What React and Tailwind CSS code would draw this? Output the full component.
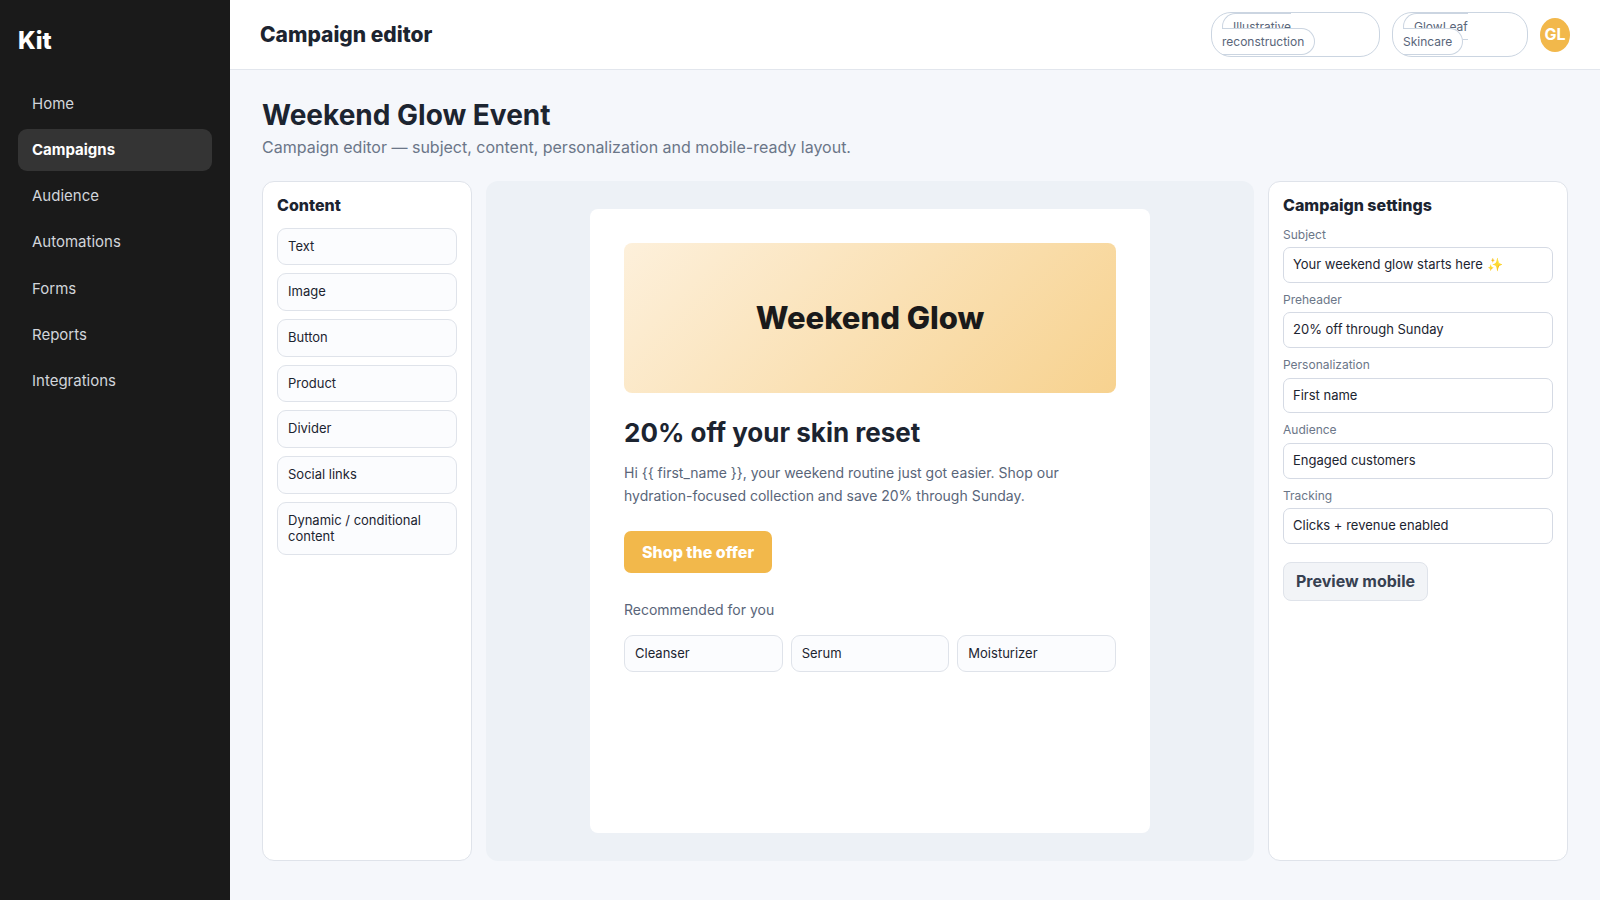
import React, { useState } from 'react';

const navItems = ['Home', 'Campaigns', 'Audience', 'Automations', 'Forms', 'Reports', 'Integrations'];

const contentBlocks = [
  'Text',
  'Image',
  'Button',
  'Product',
  'Divider',
  'Social links',
  'Dynamic / conditional content',
];

const products = ['Cleanser', 'Serum', 'Moisturizer'];

const initialSettings = [
  { id: 'subject', label: 'Subject', value: 'Your weekend glow starts here ✨' },
  { id: 'preheader', label: 'Preheader', value: '20% off through Sunday' },
  { id: 'personalization', label: 'Personalization', value: 'First name' },
  { id: 'audience', label: 'Audience', value: 'Engaged customers' },
  { id: 'tracking', label: 'Tracking', value: 'Clicks + revenue enabled' },
];

const Sidebar = () => (
  <aside className="w-[230px] shrink-0 bg-[#1a1a1a] px-[18px] pt-[26px] text-white">
    <div className="mb-7 text-[24px] font-extrabold">Kit</div>
    <nav className="flex flex-col gap-1">
      {navItems.map((item) => (
        <a
          key={item}
          href="#"
          className={
            item === 'Campaigns'
              ? 'rounded-[9px] bg-[#343434] px-3.5 py-3 text-[15px] font-bold text-white'
              : 'rounded-[9px] px-3.5 py-3 text-[15px] text-[#d1d5db]'
          }
        >
          {item}
        </a>
      ))}
    </nav>
  </aside>
);

// The inner pill is inline, so it breaks over two lines together with its text
const Pill = ({ className, children }) => (
  <span className={`rounded-[20px] border border-[#cbd5e1] bg-white px-2.5 pt-1.5 pb-[7px] text-[12px] leading-[15px] text-[#596579] ${className}`}>
    <span className="rounded-full border border-[#cbd5e1] bg-white px-2.5 py-[5px]">{children}</span>
  </span>
);

const Topbar = () => (
  <header className="flex h-[70px] items-center justify-between border-b border-[#e2e6ed] bg-white px-[30px]">
    <div className="text-[21px] font-extrabold">Campaign editor</div>
    <div className="flex items-center gap-3">
      <Pill className="w-[169px]">Illustrative reconstruction</Pill>
      <Pill className="w-[136px]">GlowLeaf Skincare</Pill>
      <div className="flex h-[34px] w-[30px] items-center justify-center rounded-[50%] bg-[#f2b84b] font-bold text-white">
        GL
      </div>
    </div>
  </header>
);

const Block = ({ children }) => (
  <div className="rounded-[9px] border border-[#dfe3ea] bg-[#fbfcfe] p-2.5 text-[13px]">{children}</div>
);

const EmailPreview = () => (
  <div className="flex justify-center rounded-xl bg-[#edf1f6] p-7">
    <div className="w-full max-w-[560px] rounded-lg bg-white p-[34px]">
      <div className="flex h-[150px] items-center justify-center rounded-lg bg-[linear-gradient(135deg,#fdf0db,#f7d28f)] text-[31px] font-extrabold text-[#1a1a1a]">
        Weekend Glow
      </div>
      <h2 className="mt-6 text-[26px] font-bold">20% off your skin reset</h2>
      <p className="mt-3 text-[14px] leading-[23px] text-[#596579]">
        {'Hi {{ first_name }}, your weekend routine just got easier. Shop our hydration-focused collection and save 20% through Sunday.'}
      </p>
      <button className="mt-6 rounded-[7px] bg-[#f2b84b] px-[18px] py-[11px] leading-5 font-extrabold text-white">
        Shop the offer
      </button>
      <p className="mt-[25px] text-[14px] leading-[23px] text-[#596579]">Recommended for you</p>
      <div className="mt-3.5 grid grid-cols-3 gap-2">
        {products.map((product) => (
          <Block key={product}>{product}</Block>
        ))}
      </div>
    </div>
  </div>
);

const SettingsPanel = () => {
  const [settings, setSettings] = useState(initialSettings);

  const handleChange = (id, value) => {
    setSettings(settings.map((s) => (s.id === id ? { ...s, value } : s)));
  };

  return (
    <section className="rounded-xl border border-[#dfe3ea] bg-white p-3.5">
      <h3 className="mb-3 font-extrabold">Campaign settings</h3>
      {settings.map(({ id, label, value }) => (
        <div key={id} className="mb-2.5">
          <label htmlFor={id} className="mb-[5px] block text-[12px] text-[#6b7688]">
            {label}
          </label>
          <input
            id={id}
            type="text"
            value={value}
            onChange={(e) => handleChange(id, e.target.value)}
            className="block w-full rounded-[7px] border border-[#d5dae4] bg-white px-[9px] py-[9px] text-[13px]"
          />
        </div>
      ))}
      <button className="mt-2 rounded-lg border border-[#dfe3ea] bg-[#f2f4f7] px-3 py-[9px] font-bold text-[#374151]">
        Preview mobile
      </button>
    </section>
  );
};

const App = () => {
  return (
    <div className="flex min-h-screen bg-[#f5f7fb] font-['Inter',sans-serif] text-[16px] leading-[1.21] text-[#1c2430]">
      <Sidebar />
      <div className="min-w-0 flex-1">
        <Topbar />
        <main className="px-8 pt-[29px]">
          <h1 className="text-[28px] font-bold">Weekend Glow Event</h1>
          <p className="mt-[5px] text-[#6b7688]">
            Campaign editor — subject, content, personalization and mobile-ready layout.
          </p>
          <div className="mt-6 grid min-h-[680px] grid-cols-[210px_1fr_300px] gap-3.5">
            <section className="rounded-xl border border-[#dfe3ea] bg-white p-3.5">
              <h3 className="mb-3 font-extrabold">Content</h3>
              <div className="flex flex-col gap-2">
                {contentBlocks.map((block) => (
                  <Block key={block}>{block}</Block>
                ))}
              </div>
            </section>
            <EmailPreview />
            <SettingsPanel />
          </div>
        </main>
      </div>
    </div>
  );
};

export default App;
